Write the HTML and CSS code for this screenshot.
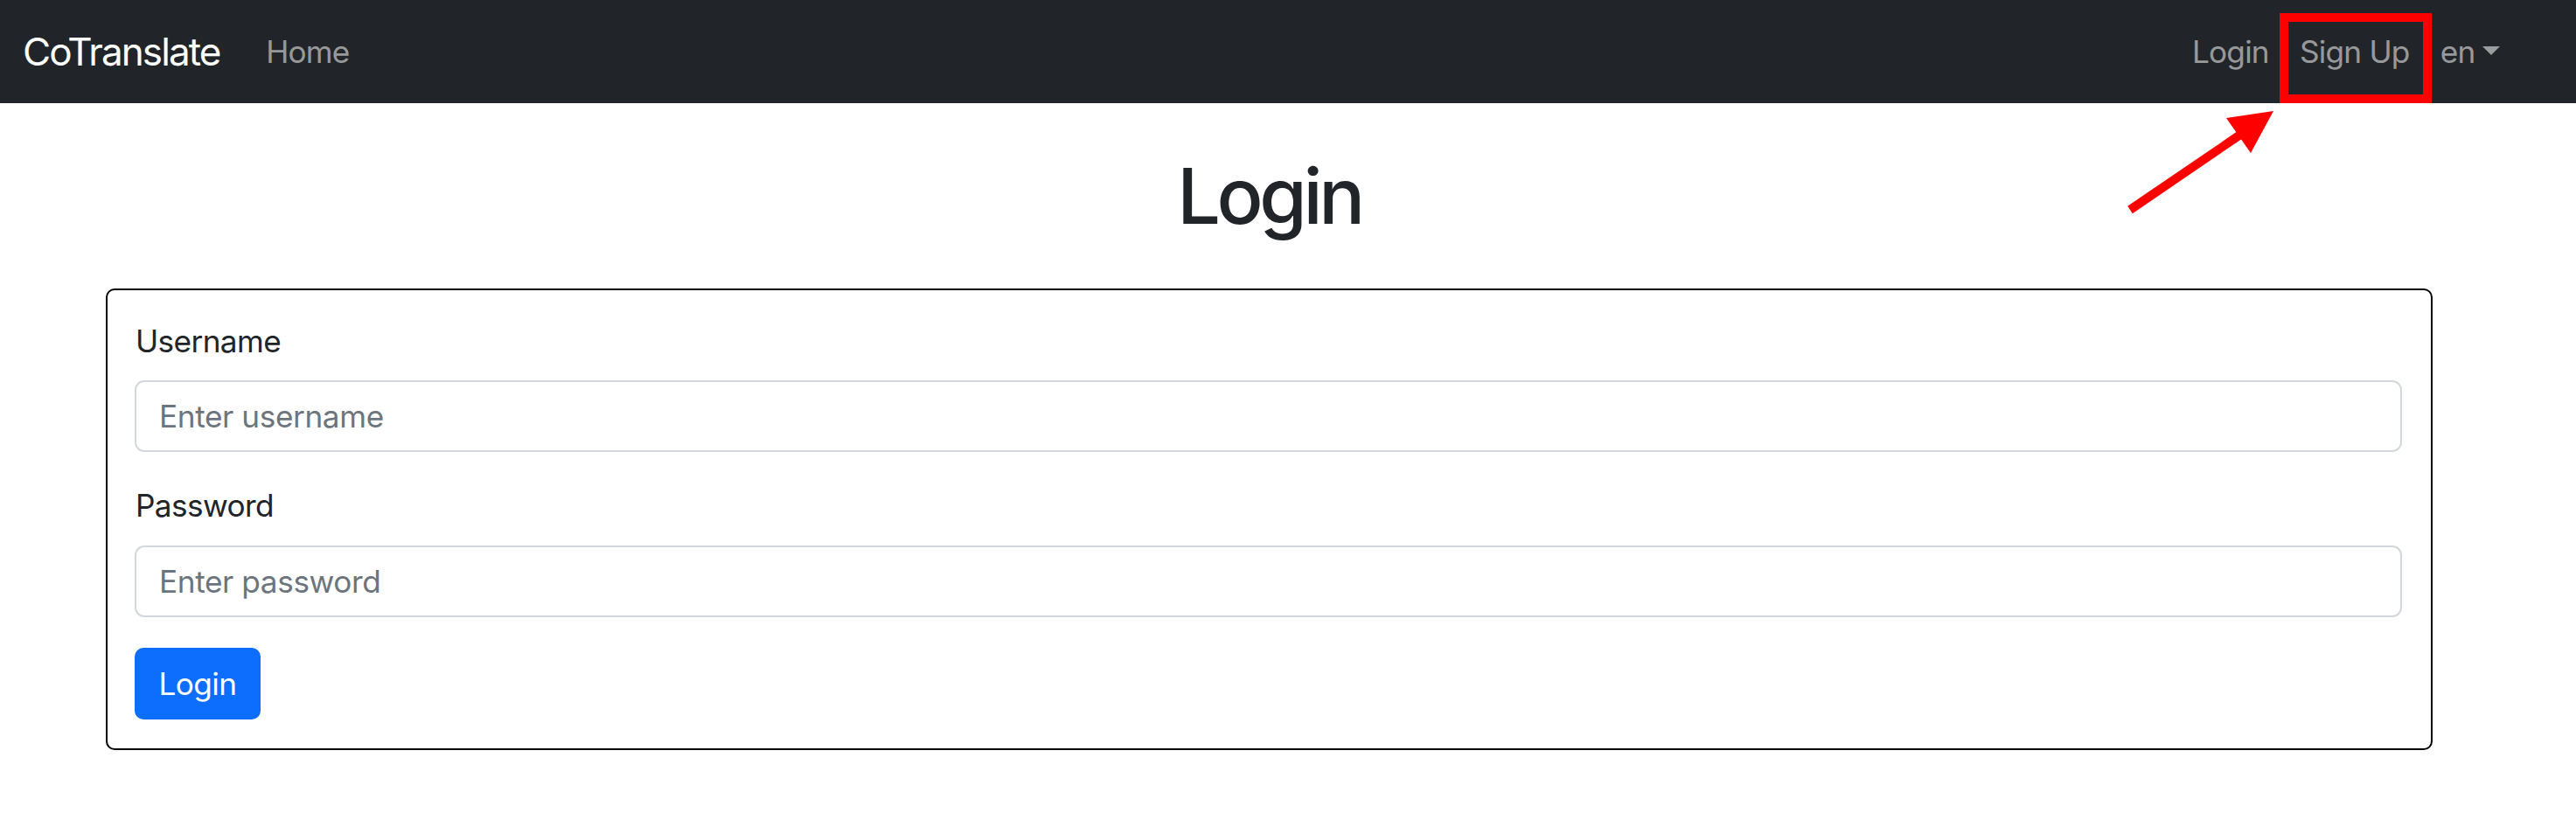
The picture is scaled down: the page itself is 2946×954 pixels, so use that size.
FILE: index.html
```html
<!DOCTYPE html>
<html lang="en">
<head>
<meta charset="utf-8">
<title>CoTranslate - Login</title>
<link rel="stylesheet" href="styles.css">
</head>
<body>
<nav class="navbar">
  <a class="brand" href="#">CoTranslate</a>
  <ul class="nav nav-left">
    <li><a class="nav-link" href="#">Home</a></li>
  </ul>
  <ul class="nav nav-right">
    <li><a class="nav-link" href="#">Login</a></li>
    <li><a class="nav-link" href="#">Sign Up</a></li>
    <li><a class="nav-link dropdown-toggle" href="#">en</a></li>
  </ul>
</nav>

<div class="highlight-box"></div>
<svg class="annot-arrow" width="200" height="140" viewBox="2420 110 200 140" xmlns="http://www.w3.org/2000/svg">
  <line x1="2436" y1="240" x2="2565" y2="152" stroke="#ff0000" stroke-width="10"/>
  <polygon points="2546,135 2600,127 2574,175" fill="#ff0000"/>
</svg>

<main class="main">
  <h1 class="title">Login</h1>
  <form class="card">
    <div class="group">
      <label class="form-label" for="username">Username</label>
      <input class="form-control" id="username" type="text" placeholder="Enter username">
    </div>
    <div class="group">
      <label class="form-label" for="password">Password</label>
      <input class="form-control" id="password" type="password" placeholder="Enter password">
    </div>
    <button class="btn" type="submit">Login</button>
  </form>
</main>
</body>
</html>
```

FILE: styles.css
```css
* { box-sizing: border-box; }

html, body {
  margin: 0;
  padding: 0;
  background: #ffffff;
}

body {
  font-family: Inter, "Noto Sans", "Liberation Sans", sans-serif;
  color: #212529;
  font-size: 35.2px;
  line-height: 1.5;
  position: relative;
  width: 2946px;
  height: 954px;
  overflow: hidden;
}

.navbar {
  display: flex;
  align-items: center;
  height: 118px;
  background: #212529;
  padding: 0 26px;
}

.brand {
  color: #ffffff;
  text-decoration: none;
  font-size: 44px;
  line-height: 66px;
  margin-right: 35px;
  letter-spacing: -1.9px;
}

.nav {
  list-style: none;
  margin: 0;
  padding: 0;
  display: flex;
  align-items: center;
}

.nav-right {
  margin-left: auto;
  margin-right: 43px;
}

.nav-link {
  display: block;
  color: rgba(255, 255, 255, 0.55);
  text-decoration: none;
  padding: 0 17.6px;
  font-size: 35.2px;
  line-height: 52.8px;
  letter-spacing: -0.8px;
}

.dropdown-toggle::after {
  content: "";
  display: inline-block;
  vertical-align: 0.255em;
  margin-left: 0.255em;
  border-top: 0.3em solid;
  border-right: 0.3em solid transparent;
  border-left: 0.3em solid transparent;
  border-bottom: 0;
}

.highlight-box {
  position: absolute;
  left: 2607px;
  top: 15px;
  width: 174px;
  height: 103px;
  border: 10px solid #ff0000;
}

.annot-arrow {
  position: absolute;
  left: 2420px;
  top: 110px;
}

.main {
  width: 2661px;
  margin-left: 121px;
}

.title {
  margin: 54px 0 52px;
  font-size: 88px;
  line-height: 1.2;
  font-weight: 500;
  text-align: center;
  letter-spacing: -4.4px;
}

.card {
  display: flex;
  flex-direction: column;
  align-items: flex-start;
  border: 2px solid #000000;
  border-radius: 10px;
  padding: 32px 33px 33px 31px;
}

.group {
  width: 100%;
  margin-bottom: 35px;
}

.form-label {
  display: block;
  margin-bottom: 19px;
  line-height: 52.8px;
  padding-left: 1px;
  letter-spacing: -0.6px;
}

.form-control {
  display: block;
  width: 100%;
  height: 82px;
  border: 2px solid #d3d7dc;
  border-radius: 11px;
  padding: 0 26px;
  font-family: inherit;
  font-size: 35.2px;
  color: #212529;
  background: #ffffff;
  letter-spacing: -0.4px;
}

.form-control::placeholder {
  color: #6c757d;
  opacity: 1;
}

.btn {
  height: 82px;
  width: 144px;
  border: 0;
  border-radius: 10px;
  background: #0d6efd;
  color: #ffffff;
  font-family: inherit;
  font-size: 35.2px;
  padding: 0;
  letter-spacing: -0.6px;
}
```
